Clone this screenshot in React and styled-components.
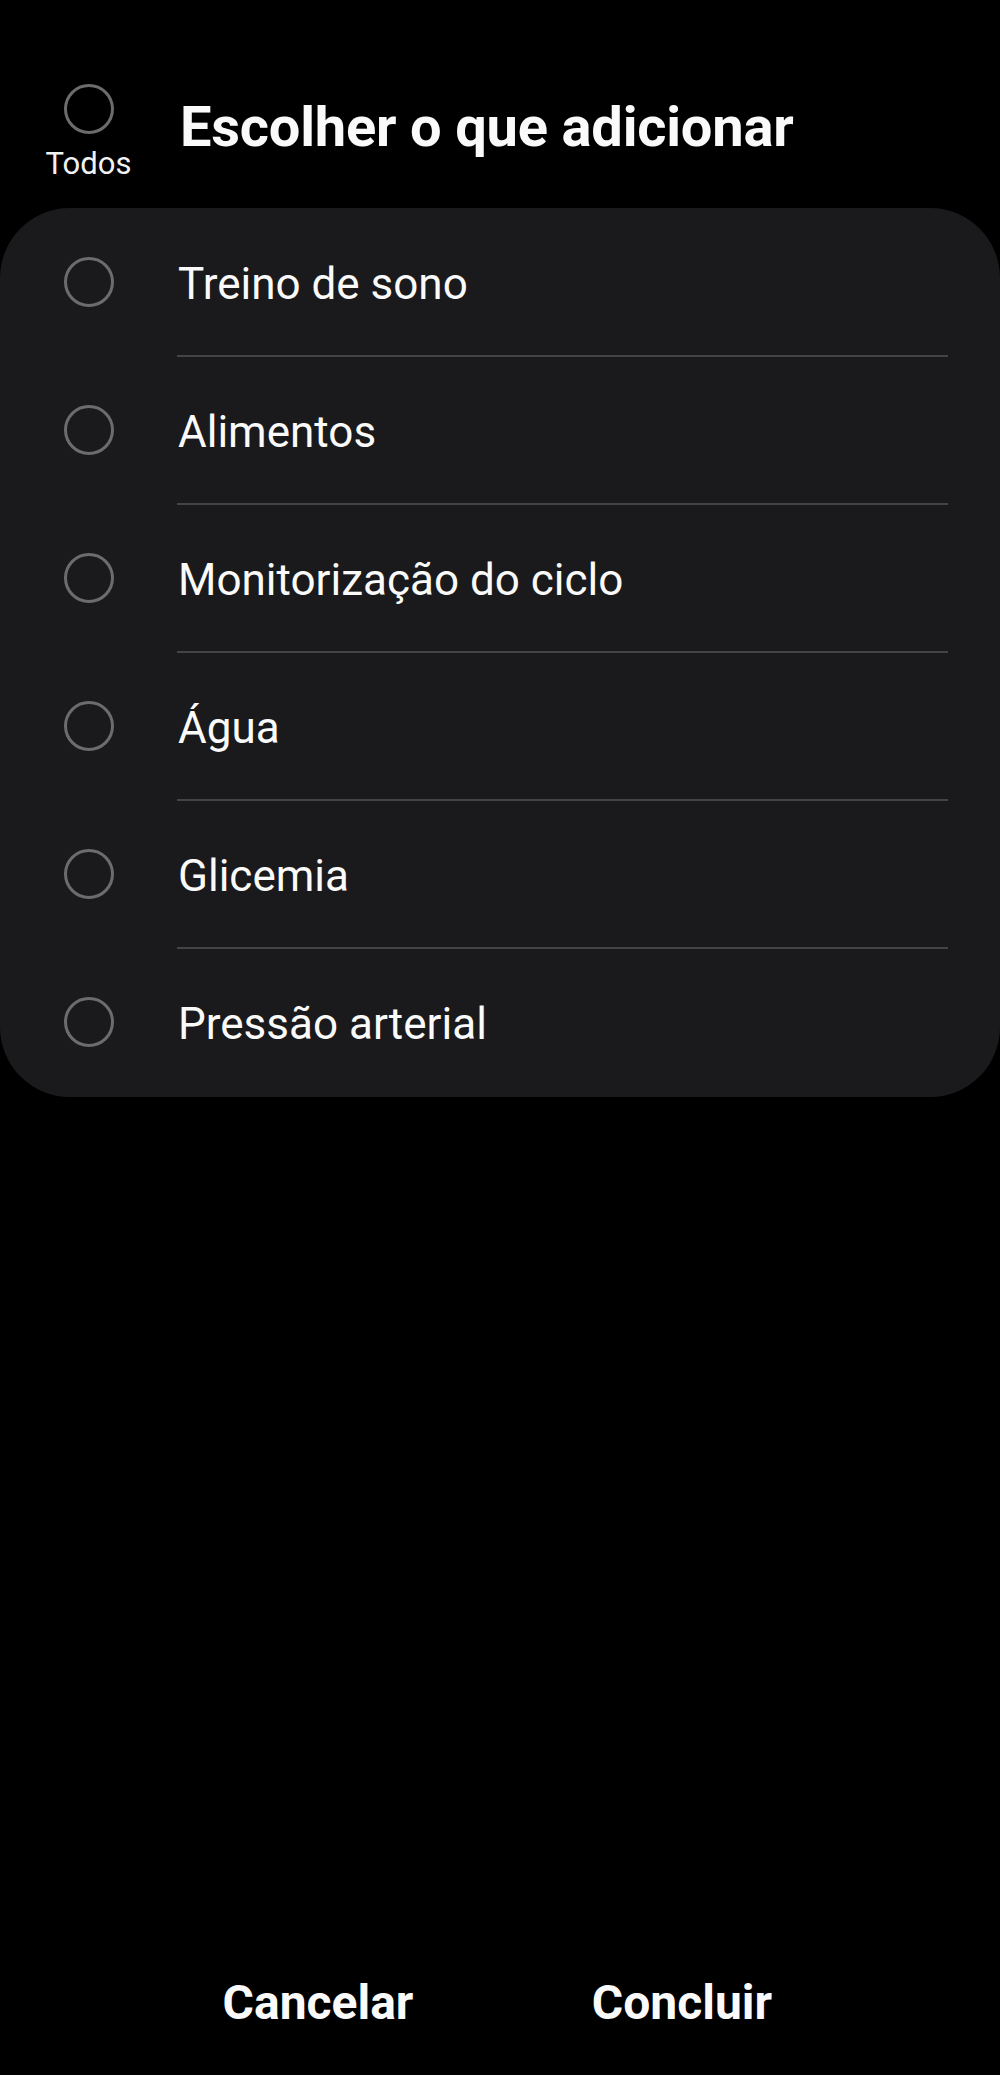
import React from "react";
import styled, { createGlobalStyle } from "styled-components";

const Global = createGlobalStyle`
  html, body { margin: 0; padding: 0; background: #000; }
  * { box-sizing: border-box; }
`;

const Page = styled.div`
  width: 1000px;
  height: 2075px;
  background: #000;
  display: flex;
  flex-direction: column;
  font-family: Roboto, "Noto Sans", sans-serif;
  color: #fafafa;
`;

const Header = styled.header`
  display: flex;
  align-items: flex-start;
  height: 208px;
`;

const AllColumn = styled.div`
  width: 177px;
  padding-top: 84px;
  display: flex;
  flex-direction: column;
  align-items: center;
`;

const AllLabel = styled.span`
  margin-top: 12px;
  font-size: 31px;
  line-height: 36px;
  color: #f2f2f2;
`;

const Title = styled.h1`
  margin: 0;
  padding: 95px 0 0 3px;
  font-size: 56px;
  line-height: 64px;
  font-weight: 700;
  letter-spacing: -0.2px;
  color: #fafafa;
`;

const Card = styled.div`
  background: #1a1a1c;
  border-radius: 70px;
  padding: 1px 0 2px;
  display: flex;
  flex-direction: column;
`;

const Row = styled.div`
  display: flex;
  align-items: center;
  height: 146px;
`;

const RadioCell = styled.div`
  width: 177px;
  display: flex;
  justify-content: center;
`;

const Radio = styled.span`
  display: block;
  width: 50px;
  height: 50px;
  border-radius: 50%;
  border: 3.5px solid #6c6c6e;
`;

const Label = styled.span`
  padding: 3px 0 0 1px;
  font-size: 44px;
  line-height: 52px;
  color: #fafafa;
`;

const Divider = styled.div`
  height: 2px;
  margin: 0 52px 0 177px;
  background: #444446;
`;

const Footer = styled.footer`
  margin-top: auto;
  height: 150px;
  padding: 6px 136px 0;
  display: flex;
  align-items: center;
`;

const FooterButton = styled.button`
  flex: 1;
  background: none;
  border: none;
  padding: 0;
  font-family: inherit;
  font-size: 48px;
  line-height: 56px;
  font-weight: 700;
  color: #fafafa;
  text-align: center;
`;

const items = [
  "Treino de sono",
  "Alimentos",
  "Monitorização do ciclo",
  "Água",
  "Glicemia",
  "Pressão arterial",
];

export default function App() {
  return (
    <Page>
      <Global />
      <Header>
        <AllColumn>
          <Radio />
          <AllLabel>Todos</AllLabel>
        </AllColumn>
        <Title>Escolher o que adicionar</Title>
      </Header>
      <Card>
        {items.map((item, i) => (
          <React.Fragment key={item}>
            {i > 0 && <Divider />}
            <Row>
              <RadioCell>
                <Radio />
              </RadioCell>
              <Label>{item}</Label>
            </Row>
          </React.Fragment>
        ))}
      </Card>
      <Footer>
        <FooterButton>Cancelar</FooterButton>
        <FooterButton>Concluir</FooterButton>
      </Footer>
    </Page>
  );
}
